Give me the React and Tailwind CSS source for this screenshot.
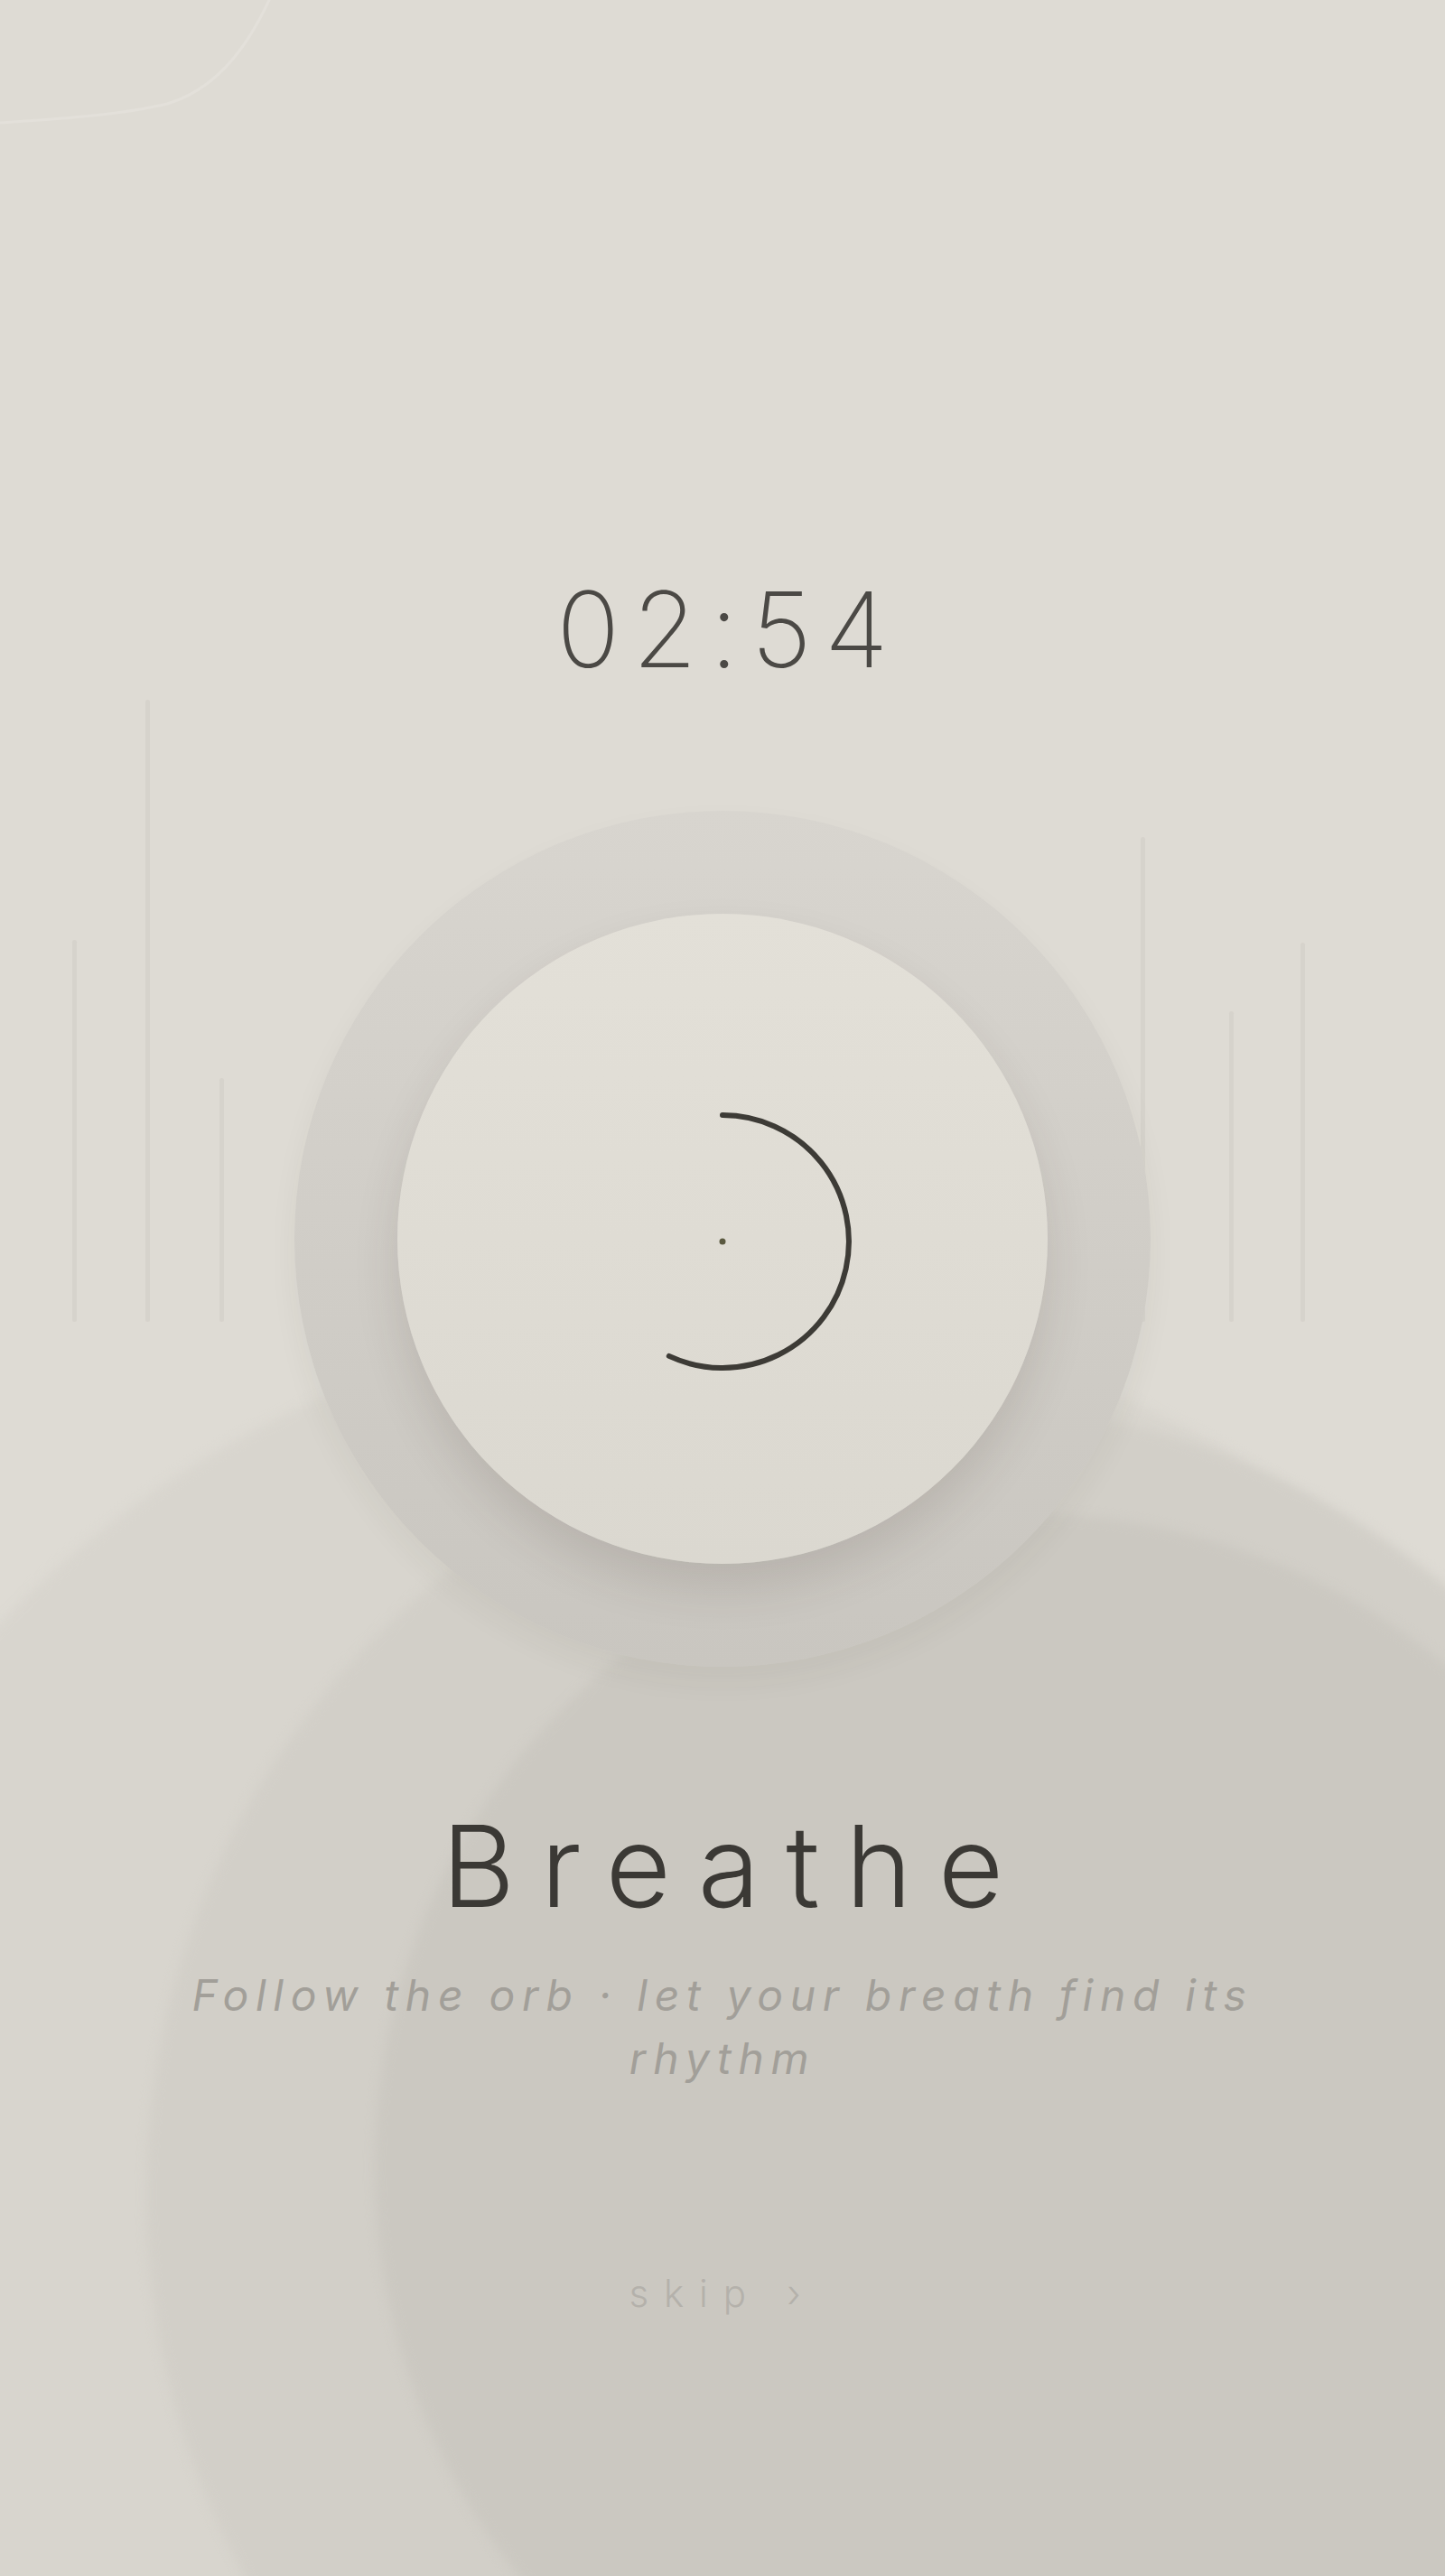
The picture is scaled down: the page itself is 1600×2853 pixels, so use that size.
import React from 'react';

// faint vertical "sound" bars behind the orb: [centerX, top]
const bars = [
  [82, 1041],
  [163, 775],
  [245, 1194],
  [1265, 927],
  [1363, 1120],
  [1442, 1044],
];

function Backdrop() {
  return (
    <div className="pointer-events-none absolute inset-0">
      {/* big soft blobs */}
      <div className="absolute left-[-305px] top-[1455px] h-[2210px] w-[2210px] rounded-full bg-[#d8d5ce] blur-[6px]" />
      <div className="absolute left-[162px] top-[1553px] h-[1754px] w-[1754px] rounded-full bg-[#d2cfc8] blur-[6px]" />
      <div className="absolute left-[415px] top-[1677px] h-[1446px] w-[1446px] rounded-full bg-[#cbc8c1] blur-[6px]" />

      {/* faint arc top-left */}
      <svg className="absolute left-0 top-0" width="320" height="160" viewBox="0 0 320 160" fill="none">
        <path d="M298 0 C 270 60, 235 100, 185 115 C 130 128, 60 132, 0 136" stroke="#e3e0da" strokeWidth="3" strokeLinecap="round" />
      </svg>

      {bars.map(([x, top]) => (
        <div
          key={x}
          className="absolute w-[5px] rounded-full bg-[#d6d3cc]"
          style={{ left: x - 2, top, height: 1464 - top }}
        />
      ))}
    </div>
  );
}

function Orb() {
  return (
    <div className="flex h-[948px] w-[948px] items-center justify-center rounded-full bg-linear-to-b from-[#d8d5cf] to-[#c9c6c0] shadow-[0_16px_32px_rgba(60,50,40,0.05)]">
      <div className="relative h-[720px] w-[720px] rounded-full bg-linear-to-b from-[#e3e0d8] to-[#dbd8d0] shadow-[0_28px_50px_rgba(60,50,40,0.13)]">
        <svg className="absolute inset-0" width="720" height="720" viewBox="0 0 720 720" fill="none">
          <path d="M360 223 A 140 140 0 1 1 300.8 489.9" stroke="#3d3b36" strokeWidth="6" strokeLinecap="round" />
          <circle cx="360" cy="363" r="3.5" fill="#5a5940" />
        </svg>
      </div>
    </div>
  );
}

export default function App() {
  return (
    <div className="relative min-h-screen w-full overflow-hidden bg-[#dedbd4] font-['Inter','Liberation_Sans',sans-serif]">
      <Backdrop />
      <main className="relative flex flex-col items-center pt-[639px]">
        <p className="pl-[0.12em] text-[116px] font-extralight leading-none tracking-[0.12em] text-[#4b4945]">02:54</p>

        <div className="mt-[143px]">
          <Orb />
        </div>

        <h1 className="mt-[158px] pl-[0.23em] text-[125px] font-light leading-none tracking-[0.23em] text-[#3b3935]">
          Breathe
        </h1>

        <p className="mt-[46px] max-w-[1280px] text-center text-[48px] italic font-normal leading-[70px] tracking-[0.16em] text-[#a29f99]">
          Follow the orb · let your breath find its rhythm
        </p>

        <button className="mt-[196px] px-4 py-2 text-[42px] font-light leading-none tracking-[0.4em] text-[#b4b1ab]">
          skip ›
        </button>
      </main>
    </div>
  );
}
